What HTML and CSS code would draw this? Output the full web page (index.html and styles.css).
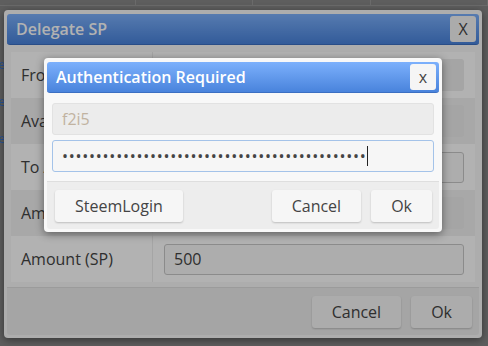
FILE: index.html
```html
<!DOCTYPE html>
<html lang="en">
<head>
    <meta charset="UTF-8">
    <title>Delegate SP</title>
    <link rel="stylesheet" href="styles.css">
</head>
<body>
    <div class="page">
        <div class="bg-table">
            <div class="bg-cell"></div>
            <div class="bg-cell"></div>
            <div class="bg-cell"></div>
            <div class="bg-cell"></div>
        </div>
        <div class="bg-links">
            <a href="#">Delegate</a>
            <a href="#">Delegate</a>
            <a href="#">Delegate</a>
        </div>

        <div class="dialog dialog-outer">
            <div class="dialog-head">
                <span class="dialog-title">Delegate SP</span>
                <button class="dialog-close">X</button>
            </div>
            <div class="dialog-body">
                <div class="form-row">
                    <div class="form-label">From</div>
                    <div class="form-field"><input class="field" type="text" value="" disabled></div>
                </div>
                <div class="form-row">
                    <div class="form-label">Available</div>
                    <div class="form-field"><input class="field" type="text" value="" disabled></div>
                </div>
                <div class="form-row">
                    <div class="form-label">To Account</div>
                    <div class="form-field"><input class="field field-edit" type="text" value=""></div>
                </div>
                <div class="form-row">
                    <div class="form-label">Amount</div>
                    <div class="form-field"><input class="field" type="text" value="" disabled></div>
                </div>
                <div class="form-row">
                    <div class="form-label">Amount (SP)</div>
                    <div class="form-field"><input class="field field-edit" type="text" value="500"></div>
                </div>
            </div>
            <div class="dialog-foot">
                <button class="btn">Cancel</button>
                <button class="btn">Ok</button>
            </div>
        </div>

        <div class="overlay"></div>

        <div class="dialog dialog-auth">
            <div class="dialog-head">
                <span class="dialog-title">Authentication Required</span>
                <button class="dialog-close">x</button>
            </div>
            <div class="auth-body">
                <input class="field" type="text" value="f2i5" disabled>
                <div class="field-wrap">
                    <input class="field field-active" type="password" value="aaaaaaaaaaaaaaaaaaaaaaaaaaaaaaaaaaaaaaaaaaaaa">
                    <span class="caret"></span>
                </div>
            </div>
            <div class="dialog-foot">
                <button class="btn btn-left">SteemLogin</button>
                <button class="btn">Cancel</button>
                <button class="btn">Ok</button>
            </div>
        </div>
    </div>
</body>
</html>
```

FILE: styles.css
```css
body {
    margin: 0;
    font-family: "Open Sans", "Liberation Sans", sans-serif;
    font-size: 16px;
    color: #444;
}
.page {
    position: relative;
    width: 488px;
    height: 346px;
    overflow: hidden;
    background: #878787;
}
.bg-table {
    display: flex;
    height: 5px;
    border-bottom: 1px solid #9a9a9a;
}
.bg-cell {
    width: 148px;
    border-right: 1px solid #9a9a9a;
}
.bg-cell:first-child {
    width: 171px;
}
.bg-links {
    position: absolute;
    right: 483px;
    top: 58px;
    display: flex;
    flex-direction: column;
    gap: 23px;
    font-size: 12px;
}
.bg-links a {
    color: #3d79d6;
    text-decoration: none;
    line-height: 14px;
}
.overlay {
    position: absolute;
    inset: 0;
    background: rgba(0, 0, 0, 0.3);
}

/* dialogs */
.dialog {
    position: absolute;
    box-sizing: border-box;
    display: flex;
    flex-direction: column;
    background: #f8f8f8;
    border-radius: 4px;
    box-shadow: 0 2px 8px rgba(0, 0, 0, 0.45);
}
.dialog-outer {
    left: 4px;
    top: 10px;
    width: 478px;
    height: 328px;
    padding: 4px 3px 3px;
}
.dialog-auth {
    left: 44px;
    top: 58px;
    width: 398px;
    height: 174px;
    padding: 4px 3px 3px;
}
.dialog-head {
    display: flex;
    align-items: center;
    justify-content: space-between;
    height: 31px;
    box-sizing: border-box;
    padding: 0 3px 0 9px;
    background: linear-gradient(#7cb0fc, #4983dc);
    border-bottom: 1px solid #3b6fc2;
    border-radius: 3px;
}
.dialog-title {
    color: #fff;
    font-weight: 600;
    font-size: 16px;
}
.dialog-close {
    width: 26px;
    height: 26px;
    padding: 0;
    border: none;
    border-radius: 3px;
    background: #f5f5f5;
    color: #444;
    font-family: inherit;
    font-size: 16px;
}
.dialog-foot {
    display: flex;
    gap: 10px;
    justify-content: flex-end;
    height: 48px;
    box-sizing: border-box;
    padding: 8px 7px 0 8px;
    margin-top: auto;
    background: #ededed;
    border-top: 1px solid #dedede;
    border-radius: 0 0 3px 3px;
}
.btn {
    height: 32px;
    padding: 0 20px;
    border: none;
    border-radius: 3px;
    background: #f6f6f6;
    box-shadow: 0 1px 2px rgba(0, 0, 0, 0.2);
    color: #444;
    font-family: inherit;
    font-size: 16px;
}
.btn-left {
    margin-right: auto;
}

/* fields */
.field {
    box-sizing: border-box;
    width: 100%;
    height: 32px;
    padding: 0 9px;
    border: 1px solid #e2e2e2;
    border-radius: 3px;
    background: #ececec;
    color: #444;
    font-family: inherit;
    font-size: 16px;
}
.field:disabled {
    color: #c1b3a1;
}
.field-edit {
    height: 31px;
    background: #f8f8f8;
    border-color: #c8c8c8;
}
.field-wrap {
    position: relative;
}
.field-active {
    display: block;
    background: #f6f6f6;
    border-color: #a4c3e9;
    outline: none;
    letter-spacing: 0.75px;
}
.caret {
    position: absolute;
    left: 315px;
    top: 6px;
    width: 1px;
    height: 20px;
    background: #222;
}

/* delegate form */
.dialog-body {
    padding: 7px 4px 0;
}
.form-row {
    display: flex;
    height: 46px;
    background: #fff;
}
.form-row:nth-child(even) {
    background: #f1f1f1;
}
.form-label {
    display: flex;
    align-items: center;
    width: 142px;
    padding-left: 10px;
    box-sizing: border-box;
    border-right: 1px solid #ececec;
}
.form-field {
    flex: 1;
    display: flex;
    align-items: center;
    padding: 0 11px 0 11px;
}
.dialog-outer .field:disabled {
    border-color: transparent;
    background: #ececec;
}

/* auth form */
.auth-body {
    display: flex;
    flex-direction: column;
    gap: 5px;
    padding: 10px 5px 9px;
}
```
